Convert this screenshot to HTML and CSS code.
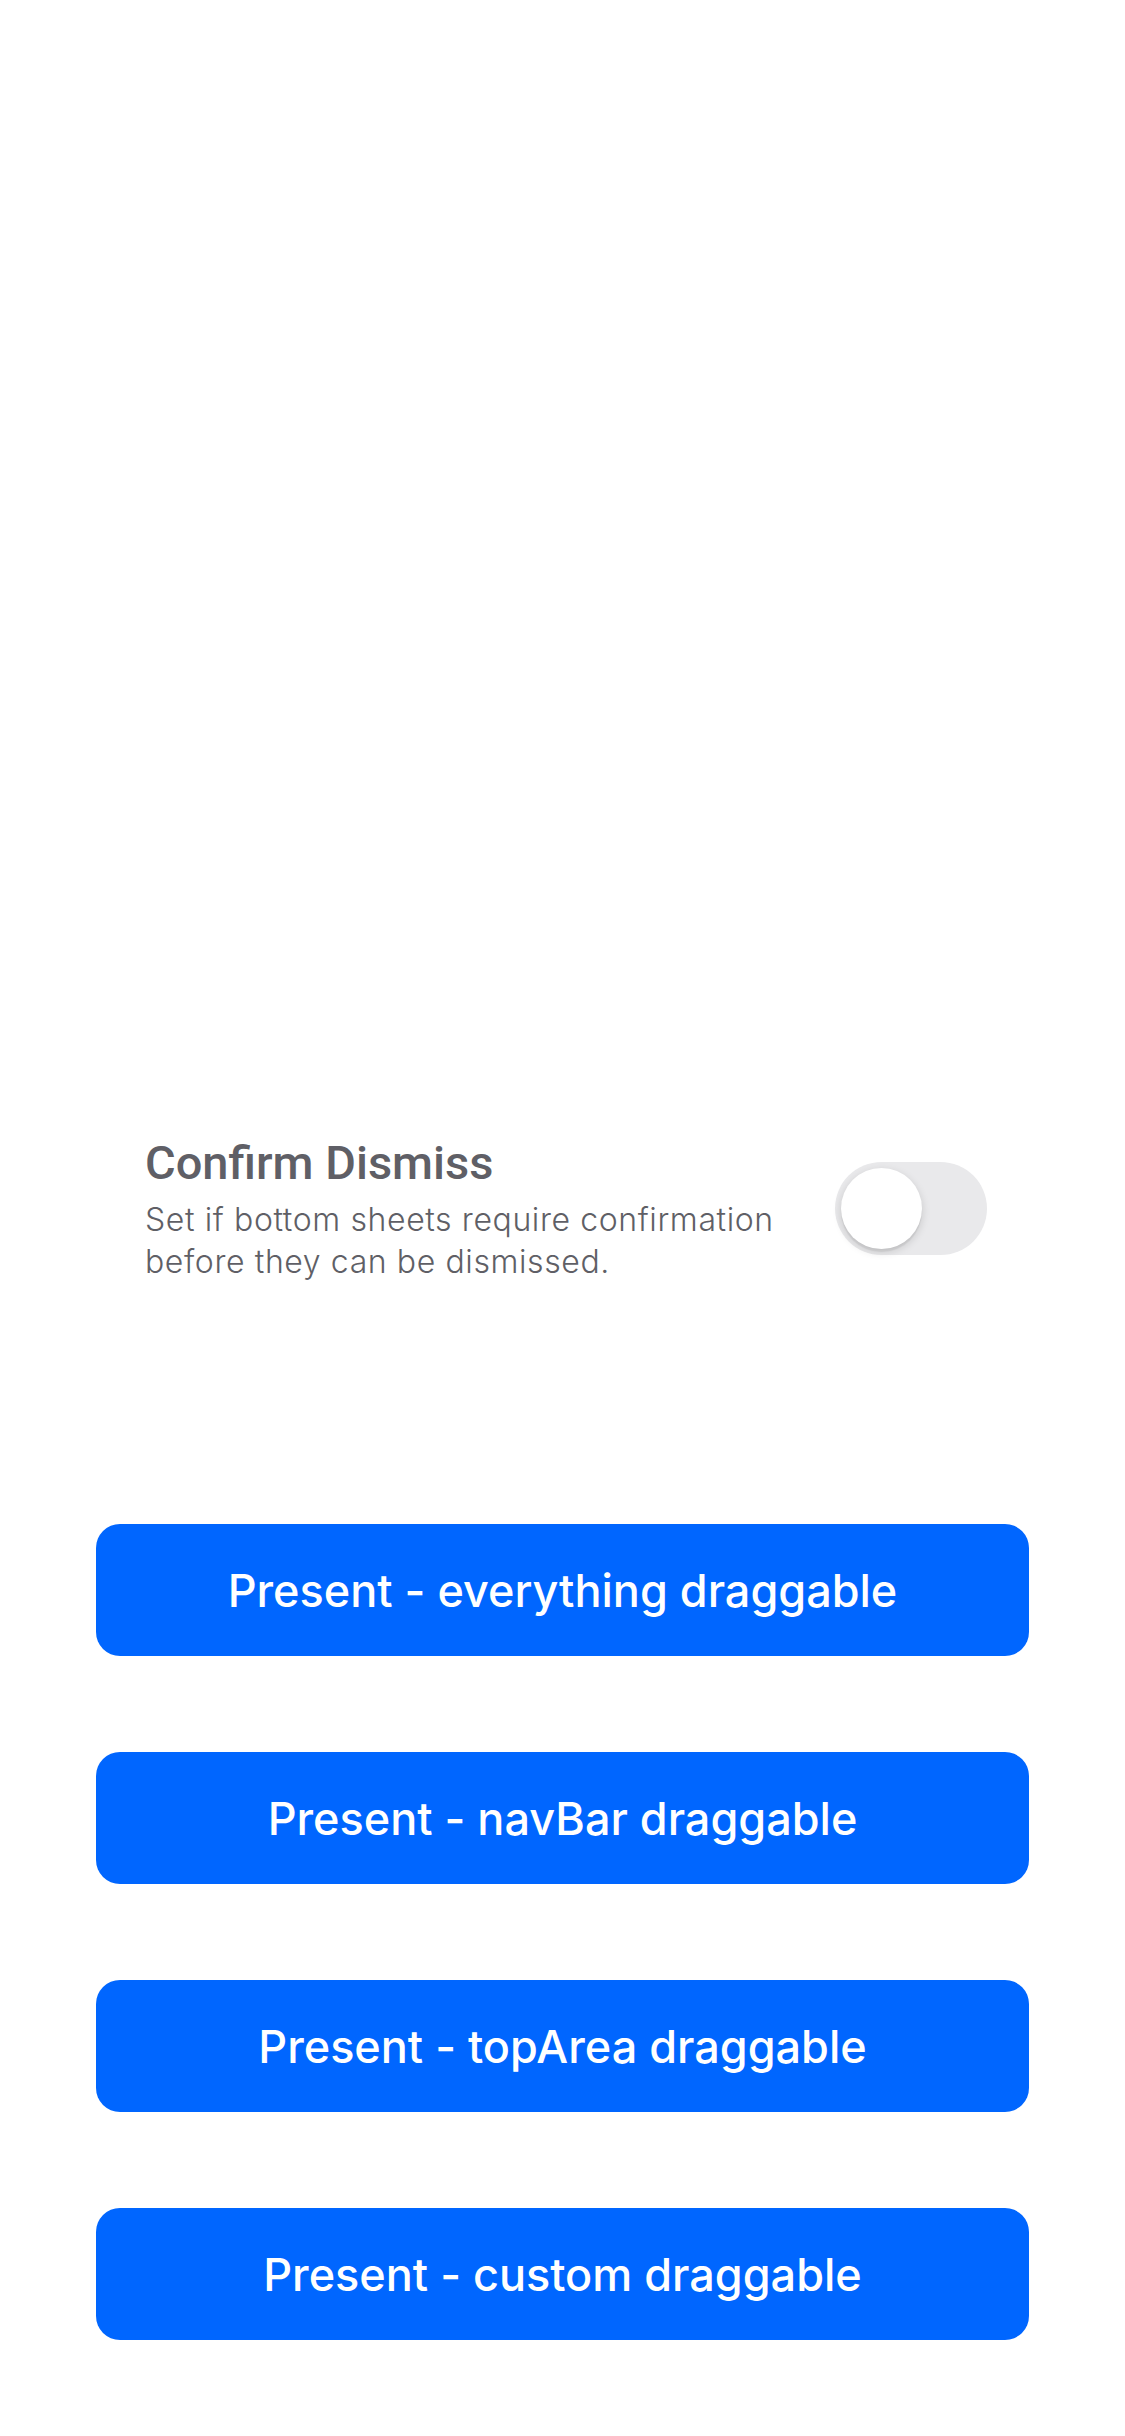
FILE: index.html
```html
<!DOCTYPE html>
<html>
<head>
<meta charset="utf-8">
<link rel="stylesheet" href="styles.css">
</head>
<body>
<div class="page">
  <div class="settings">
    <div class="row">
      <div class="row-text">
        <div class="row-title">Confirm Dismiss</div>
        <div class="row-sub">Set if bottom sheets require confirmation before they can be dismissed.</div>
      </div>
      <div class="switch"><div class="knob"></div></div>
    </div>
  </div>
  <div class="buttons">
    <button class="btn">Present - everything draggable</button>
    <button class="btn">Present - navBar draggable</button>
    <button class="btn">Present - topArea draggable</button>
    <button class="btn">Present - custom draggable</button>
  </div>
</div>
</body>
</html>
```
FILE: styles.css
```css
html, body {
  margin: 0;
  padding: 0;
  background: #ffffff;
}
body {
  font-family: Roboto, "Open Sans", sans-serif;
}
.page {
  height: 2436px;
  display: flex;
  flex-direction: column;
  box-sizing: border-box;
}
.settings {
  padding: 1133px 138px 0 145px;
}
.row {
  display: flex;
  align-items: center;
  justify-content: space-between;
}
.row-text {
  width: 680px;
  color: #5f5f66;
}
.row-title {
  font-family: Roboto, sans-serif;
  font-size: 47px;
  font-weight: 500;
  line-height: 60px;
}
.row-sub {
  font-family: Inter, Roboto, sans-serif;
  font-size: 32px;
  font-weight: 300;
  letter-spacing: 0.6px;
  line-height: 42px;
  margin-top: 6px;
}
.switch {
  width: 152px;
  height: 93px;
  border-radius: 47px;
  background: #e9e9eb;
  box-sizing: border-box;
  padding: 6px;
  display: flex;
  align-items: center;
}
.knob {
  width: 81px;
  height: 81px;
  border-radius: 50%;
  background: #ffffff;
  box-shadow: 0 3px 8px rgba(0,0,0,0.15), 0 3px 1px rgba(0,0,0,0.06);
}
.buttons {
  margin-top: auto;
  padding: 0 96px 96px;
  display: flex;
  flex-direction: column;
  gap: 96px;
}
.btn {
  height: 132px;
  border: none;
  border-radius: 24px;
  background: #0066ff;
  color: #ffffff;
  font-family: Inter, Roboto, sans-serif;
  font-size: 45px;
  font-weight: 500;
  padding: 0;
}
```
